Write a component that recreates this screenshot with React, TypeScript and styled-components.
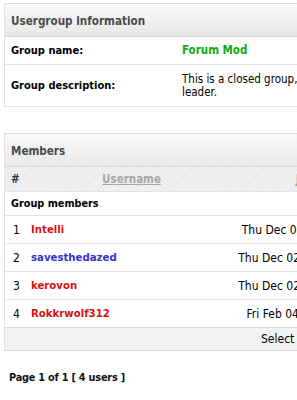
import React from "react";
import styled, { createGlobalStyle } from "styled-components";

const Global = createGlobalStyle`
  html, body { margin: 0; padding: 0; background: #ffffff; overflow: hidden; }
  body { font-family: "DejaVu Sans Condensed", "DejaVu Sans", sans-serif; font-size: 11.5px; color: #000; }
`;

const Page = styled.div`
  width: 640px;
  padding: 3px 0 0 4px;
`;

const Panel = styled.div<{ $gap?: number }>`
  margin-top: ${(p) => p.$gap ?? 0}px;
  border-left: 1px solid #e2e2e2;
`;

const PanelHeader = styled.div`
  box-sizing: border-box;
  height: 34px;
  padding: 2px 0 0 6px;
  display: flex;
  align-items: center;
  border-top: 1px solid #dcdcdc;
  border-bottom: 1px solid #d6d6d6;
  background: linear-gradient(#fafafa, #e8e8e8);
  color: #4b4b4b;
  font-weight: bold;
  font-size: 11.6px;
`;

const InfoRow = styled.div<{ $h: number }>`
  display: grid;
  grid-template-columns: 170px 1fr;
  align-items: center;
  min-height: ${(p) => p.$h}px;
  border-bottom: 1px solid #e3e3e3;
`;

const InfoLabel = styled.div`
  padding-left: 6px;
  font-weight: bold;
  font-size: 11px;
`;

const InfoValue = styled.div<{ $color?: string; $bold?: boolean }>`
  padding-left: 7px;
  color: ${(p) => p.$color ?? "#000"};
  font-weight: ${(p) => (p.$bold ? "bold" : "normal")};
  font-size: 11.5px;
  line-height: 13px;
`;

const Line = styled.span`
  display: block;
  white-space: nowrap;
`;

const ColumnHead = styled.div`
  display: grid;
  grid-template-columns: 24px 205px 160px 1fr;
  align-items: center;
  height: 24px;
  border-bottom: 1px solid #e3e3e3;
  background: repeating-linear-gradient(
    -45deg,
    #f1f1f1 0px,
    #f1f1f1 2px,
    #e8e8e8 2px,
    #e8e8e8 3px
  );
  font-weight: bold;
`;

const HeadCell = styled.div<{ $center?: boolean; $link?: boolean }>`
  padding-left: ${(p) => (p.$center ? 0 : 6)}px;
  text-align: ${(p) => (p.$center ? "center" : "left")};
  color: ${(p) => (p.$link ? "#a8a8a8" : "#333")};
  text-decoration: ${(p) => (p.$link ? "underline" : "none")};
  font-size: 11.5px;
`;

const GroupRow = styled.div`
  height: 23px;
  display: flex;
  align-items: center;
  padding-left: 6px;
  border-bottom: 1px solid #e3e3e3;
  font-weight: bold;
  font-size: 10.8px;
`;

const MemberRow = styled.div`
  display: grid;
  grid-template-columns: 24px 205px 160px 1fr;
  align-items: center;
  height: 27px;
  border-bottom: 1px solid #e3e3e3;
`;

const Num = styled.div`
  padding-left: 8px;
  font-size: 12px;
`;

const Name = styled.div<{ $color: string }>`
  padding-left: 2px;
  color: ${(p) => p.$color};
  font-weight: bold;
  font-size: 11.3px;
`;

const DateCell = styled.div`
  text-align: center;
  font-size: 12px;
  white-space: nowrap;
`;

const SortBar = styled.div`
  height: 22px;
  display: flex;
  align-items: center;
  padding-left: 256px;
  margin-top: -1px;
  border-top: 1px solid #dcdcdc;
  border-bottom: 1px solid #dcdcdc;
  background: #f2f2f2;
  font-size: 12px;
`;

const Pagination = styled.div`
  padding: 20px 0 0 5px;
  font-weight: bold;
  font-size: 10.8px;
  letter-spacing: -0.2px;
  color: #111;
`;

const members = [
  { n: 1, name: "Intelli", color: "#d81010", date: "Thu Dec 02, 2010 3:41 pm" },
  { n: 2, name: "savesthedazed", color: "#3333cc", date: "Thu Dec 02, 2010 10:11 pm" },
  { n: 3, name: "kerovon", color: "#d81010", date: "Thu Dec 02, 2010 10:25 pm" },
  { n: 4, name: "Rokkrwolf312", color: "#d81010", date: "Fri Feb 04, 2011 1:05 am" },
];

export default function App() {
  return (
    <>
      <Global />
      <Page>
        <Panel>
          <PanelHeader>Usergroup information</PanelHeader>
          <InfoRow $h={27}>
            <InfoLabel>Group name:</InfoLabel>
            <InfoValue $color="#10aa10" $bold>Forum Mod</InfoValue>
          </InfoRow>
          <InfoRow $h={41}>
            <InfoLabel>Group description:</InfoLabel>
            <InfoValue>
              <Line>This is a closed group, new members need an invite from the group</Line>
              <Line>leader.</Line>
            </InfoValue>
          </InfoRow>
        </Panel>
        <Panel $gap={26}>
          <PanelHeader>Members</PanelHeader>
          <ColumnHead>
            <HeadCell>#</HeadCell>
            <HeadCell $center $link>Username</HeadCell>
            <HeadCell $center $link>Joined</HeadCell>
            <HeadCell $center $link>Posts</HeadCell>
          </ColumnHead>
          <GroupRow>Group members</GroupRow>
          {members.map((m) => (
            <MemberRow key={m.n}>
              <Num>{m.n}</Num>
              <Name $color={m.color}>{m.name}</Name>
              <DateCell>{m.date}</DateCell>
              <DateCell>0</DateCell>
            </MemberRow>
          ))}
          <SortBar>Select sort method: Username</SortBar>
        </Panel>
        <Pagination>Page 1 of 1 [ 4 users ]</Pagination>
      </Page>
    </>
  );
}
